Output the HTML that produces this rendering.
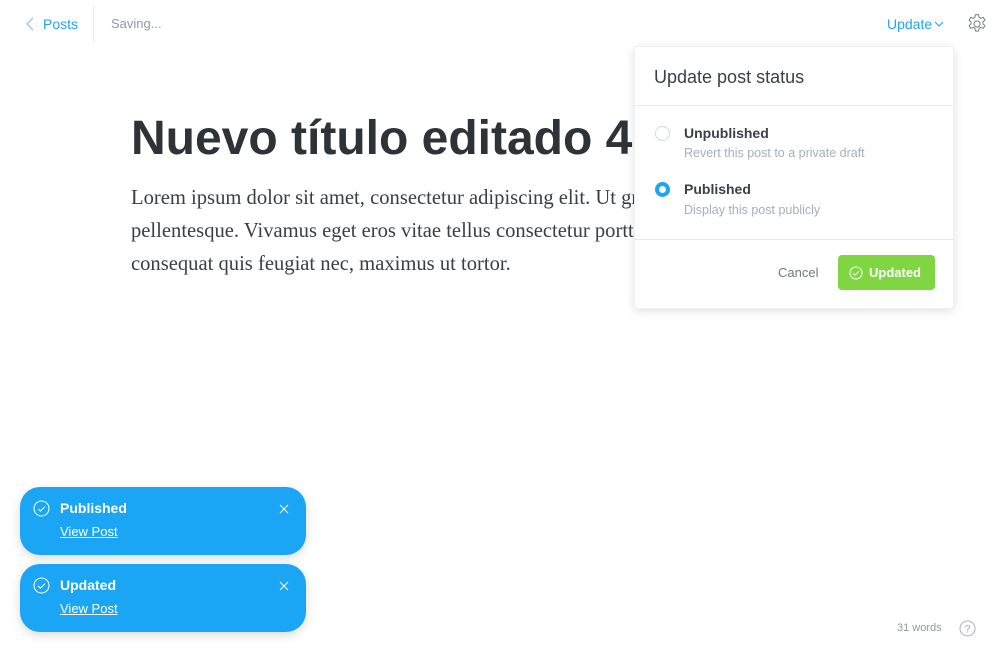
<!DOCTYPE html>
<html><head><meta charset="utf-8"><style>
*{box-sizing:border-box;margin:0;padding:0}
body{width:1000px;height:660px;background:#fff;font-family:"Liberation Sans",sans-serif;position:relative;overflow:hidden;color:#2e3338}
.abs{position:absolute}
.title{left:131px;top:109px;font-size:48px;font-weight:bold;color:#2e3338;white-space:nowrap;line-height:60px}
.body{left:131px;top:182px;font-family:"Liberation Serif",serif;font-size:20.6px;line-height:33px;color:#3a3f44;white-space:nowrap}
.pop{left:634px;top:46px;width:320px;height:263px;background:#fff;border-radius:4px;box-shadow:0 2px 10px rgba(0,0,0,.12);border:1px solid #eef2f4}
.toast{left:20px;width:286px;height:68px;background:#1ba5f5;border-radius:20px;box-shadow:0 3px 10px rgba(0,0,0,.15);color:#fff}
</style></head><body>
<svg class="abs" style="left:26px;top:17px" width="10" height="14"><path d="M7 1L1 7l6 6" fill="none" stroke="#8ccbf5" stroke-width="1.3"/></svg>
<div class="abs" style="left:43px;top:16px;font-size:14px;color:#24a3ef">Posts</div>
<div class="abs" style="left:93px;top:6px;width:1px;height:36px;background:#e4ebee"></div>
<div class="abs" style="left:111px;top:16px;font-size:13px;color:#8e9aa0">Saving...</div>
<div class="abs" style="left:887px;top:16px;font-size:14px;color:#24a3ef">Update</div>
<svg class="abs" style="left:934px;top:21px" width="10" height="7"><path d="M1 1l4 4 4-4" fill="none" stroke="#24a3ef" stroke-width="1.1"/></svg>
<svg class="abs" style="left:966px;top:13px" width="22" height="22" viewBox="0 0 20 20"><path d="M8.6 1.5h2.8l.5 2.4 1.6.9 2.3-.8 1.4 2.4-1.8 1.6v1.9l1.8 1.6-1.4 2.4-2.3-.8-1.6.9-.5 2.4H8.6l-.5-2.4-1.6-.9-2.3.8-1.4-2.4 1.8-1.6V8l-1.8-1.6 1.4-2.4 2.3.8 1.6-.9z" fill="none" stroke="#7d8a92" stroke-width="1" stroke-linejoin="round"/><circle cx="10" cy="10" r="2.8" fill="none" stroke="#7d8a92" stroke-width="1"/></svg>
<div class="abs title">Nuevo título editado 4</div>
<div class="abs body">Lorem ipsum dolor sit amet, consectetur adipiscing elit. Ut gra<br>pellentesque. Vivamus eget eros vitae tellus consectetur porttit<br>consequat quis feugiat nec, maximus ut tortor.</div>
<div class="abs pop">
 <div class="abs" style="left:19px;top:20px;font-size:18px;color:#3a4147">Update post status</div>
 <div class="abs" style="left:0;top:58px;width:318px;height:1px;background:#e0ebf0"></div>
 <div class="abs" style="left:20px;top:79px;width:15px;height:15px;border-radius:50%;border:1px solid #c9dbe5"></div>
 <div class="abs" style="left:49px;top:78px;font-size:14px;font-weight:bold;color:#3a4147">Unpublished</div>
 <div class="abs" style="left:49px;top:99px;font-size:12.5px;color:#a3b0b8">Revert this post to a private draft</div>
 <div class="abs" style="left:20px;top:135px;width:15px;height:15px;border-radius:50%;border:4px solid #1ba5f5;background:#fff"></div>
 <div class="abs" style="left:49px;top:134px;font-size:14px;font-weight:bold;color:#3a4147">Published</div>
 <div class="abs" style="left:49px;top:156px;font-size:12.5px;color:#a3b0b8">Display this post publicly</div>
 <div class="abs" style="left:0;top:192px;width:318px;height:1px;background:#e0ebf0"></div>
 <div class="abs" style="left:143px;top:218px;font-size:13px;color:#6d7a82">Cancel</div>
 <div class="abs" style="left:203px;top:208px;width:97px;height:35px;background:#7fd641;border-radius:4px;color:#fff;font-size:13px;font-weight:bold">
  <svg class="abs" style="left:11px;top:11px" width="14" height="14"><circle cx="7" cy="7" r="6" fill="none" stroke="#fff" stroke-width="1"/><path d="M4 7.2l2 2 4-4" fill="none" stroke="#fff" stroke-width="1"/></svg>
  <span class="abs" style="left:31px;top:10px">Updated</span>
 </div>
</div>
<div class="abs toast" style="top:487px">
 <svg class="abs" style="left:13px;top:13px" width="17" height="17"><circle cx="8.5" cy="8.5" r="7.5" fill="none" stroke="#fff" stroke-width="1"/><path d="M5 8.8l2.4 2.4 4.6-4.6" fill="none" stroke="#fff" stroke-width="1"/></svg>
 <div class="abs" style="left:40px;top:13px;font-size:14px;font-weight:bold">Published</div>
 <div class="abs" style="left:40px;top:37px;font-size:13px;text-decoration:underline">View Post</div>
 <svg class="abs" style="left:259px;top:17px" width="10" height="10"><path d="M1 1l8 8M9 1l-8 8" stroke="#fff" stroke-width="1"/></svg>
</div>
<div class="abs toast" style="top:564px">
 <svg class="abs" style="left:13px;top:13px" width="17" height="17"><circle cx="8.5" cy="8.5" r="7.5" fill="none" stroke="#fff" stroke-width="1"/><path d="M5 8.8l2.4 2.4 4.6-4.6" fill="none" stroke="#fff" stroke-width="1"/></svg>
 <div class="abs" style="left:40px;top:13px;font-size:14px;font-weight:bold">Updated</div>
 <div class="abs" style="left:40px;top:37px;font-size:13px;text-decoration:underline">View Post</div>
 <svg class="abs" style="left:259px;top:17px" width="10" height="10"><path d="M1 1l8 8M9 1l-8 8" stroke="#fff" stroke-width="1"/></svg>
</div>
<div class="abs" style="left:897px;top:622px;font-size:11px;color:#8e9aa0">31 words</div>
<svg class="abs" style="left:959px;top:620px" width="17" height="17"><circle cx="8.5" cy="8.5" r="7.5" fill="none" stroke="#a3b0b8" stroke-width="1"/><text x="8.5" y="12.5" font-size="11" text-anchor="middle" fill="#a3b0b8" font-family="Liberation Sans">?</text></svg>
</body></html>
